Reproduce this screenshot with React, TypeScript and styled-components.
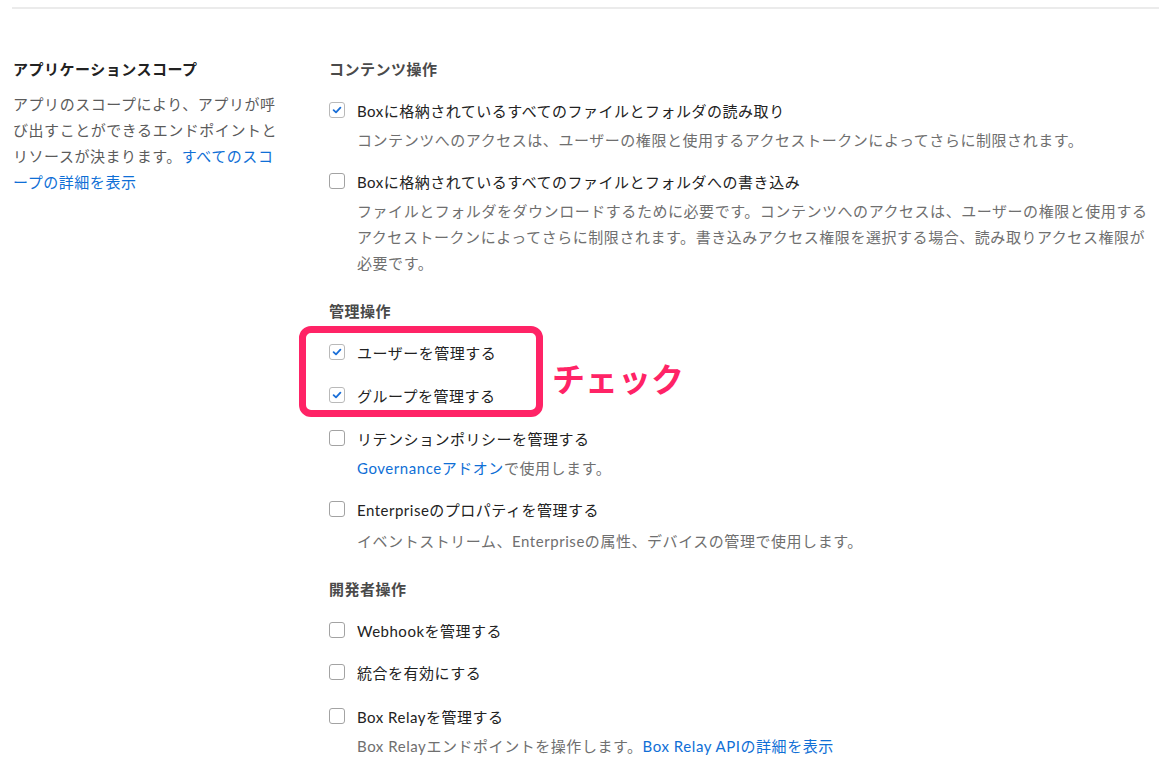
import React from "react";
import styled, { createGlobalStyle } from "styled-components";

const GlobalStyle = createGlobalStyle`
  html, body {
    margin: 0;
    padding: 0;
    background: #ffffff;
  }
  body {
    font-family: "Lato", "Noto Sans CJK JP", sans-serif;
    font-size: 15px;
    color: #222222;
    -webkit-font-smoothing: antialiased;
  }
`;

const Page = styled.div`
  width: 1171px;
  padding-top: 7px;
`;

const Divider = styled.div`
  height: 2px;
  margin: 0 12px;
  background: #ebebeb;
`;

const Section = styled.section`
  display: grid;
  grid-template-columns: 316px 1fr;
  padding: 47px 0 0 13px;
`;

const Intro = styled.div`
  display: flex;
  flex-direction: column;
  gap: 9px;
`;

const IntroTitle = styled.h2`
  margin: 0;
  font-size: 15px;
  line-height: 26px;
  font-weight: 700;
  letter-spacing: 0.5px;
  color: #222222;
`;

const IntroText = styled.p`
  margin: 0;
  width: 272px;
  font-size: 15px;
  line-height: 26px;
  letter-spacing: 0.55px;
  color: #5b5b5b;
  line-break: loose;
`;

const Link = styled.a`
  color: #0f6fd6;
  text-decoration: none;
`;

const Scopes = styled.div`
  display: flex;
  flex-direction: column;
  width: 830px;
`;

const GroupTitle = styled.h3<{ $first?: boolean }>`
  margin: ${(p) => (p.$first ? "0" : "7px")} 0 15px;
  font-size: 15px;
  line-height: 26px;
  font-weight: 700;
  letter-spacing: 0.5px;
  color: #4a4a4a;
`;

const Item = styled.div<{ $gap: number }>`
  display: flex;
  flex-direction: column;
  padding-bottom: ${(p) => p.$gap}px;
`;

const Row = styled.label`
  display: flex;
  align-items: center;
  gap: 12px;
  height: 26px;
  font-size: 15px;
  letter-spacing: 0.5px;
  color: #222222;
`;

const Box = styled.span<{ $checked?: boolean }>`
  box-sizing: border-box;
  display: inline-flex;
  align-items: center;
  justify-content: center;
  flex: none;
  width: 16px;
  height: 16px;
  border: 1px solid ${(p) => (p.$checked ? "#b9b9b9" : "#a3a3a3")};
  border-radius: 3px;
  background: #ffffff;
`;

const Desc = styled.p<{ $offset: number }>`
  margin: ${(p) => p.$offset}px 0 0 28px;
  width: 796px;
  font-size: 15px;
  line-height: 26px;
  letter-spacing: 0.55px;
  color: #6f6f6f;
`;

const Highlight = styled.div`
  position: relative;
  display: flex;
  flex-direction: column;
`;

const Frame = styled.div`
  position: absolute;
  left: -30px;
  top: -13px;
  width: 244px;
  height: 91px;
  box-sizing: border-box;
  border: 7px solid #ff2366;
  border-radius: 12px;
  pointer-events: none;
`;

const Callout = styled.span`
  position: absolute;
  left: 223px;
  top: 19px;
  font-family: "Noto Sans CJK JP", sans-serif;
  font-size: 33px;
  line-height: 40px;
  font-weight: 700;
  color: #ff2366;
  white-space: nowrap;
`;

const CheckMark = () => (
  <svg width="10" height="10" viewBox="0 0 10 10" fill="none">
    <path
      d="M1.6 5.2 L4 7.4 L8.4 2.6"
      stroke="#1a6fd8"
      strokeWidth="1.8"
      strokeLinecap="round"
      strokeLinejoin="round"
    />
  </svg>
);

type ScopeProps = {
  label: React.ReactNode;
  checked?: boolean;
  children?: React.ReactNode;
  gap?: number;
  descOffset?: number;
};

const Scope = ({ label, checked, children, gap = 17, descOffset = 4 }: ScopeProps) => (
  <Item $gap={children ? 15 : gap}>
    <Row>
      <Box $checked={checked}>{checked && <CheckMark />}</Box>
      <span>{label}</span>
    </Row>
    {children && <Desc $offset={descOffset}>{children}</Desc>}
  </Item>
);

export default function App() {
  return (
    <Page>
      <GlobalStyle />
      <Divider />
      <Section>
        <Intro>
          <IntroTitle>アプリケーションスコープ</IntroTitle>
          <IntroText>
            アプリのスコープにより、アプリが呼び出すことができるエンドポイントとリソースが決まります。
            <Link href="#">すべてのスコープの詳細を表示</Link>
          </IntroText>
        </Intro>

        <Scopes>
          <GroupTitle $first>コンテンツ操作</GroupTitle>
          <Scope label="Boxに格納されているすべてのファイルとフォルダの読み取り" checked>
            コンテンツへのアクセスは、ユーザーの権限と使用するアクセストークンによってさらに制限されます。
          </Scope>
          <Scope label="Boxに格納されているすべてのファイルとフォルダへの書き込み">
            ファイルとフォルダをダウンロードするために必要です。コンテンツへのアクセスは、ユーザーの権限と使用するアクセストークンによってさらに制限されます。書き込みアクセス権限を選択する場合、読み取りアクセス権限が必要です。
          </Scope>

          <GroupTitle>管理操作</GroupTitle>
          <Highlight>
            <Scope label="ユーザーを管理する" checked />
            <Scope label="グループを管理する" checked />
            <Frame />
            <Callout>チェック</Callout>
          </Highlight>
          <Scope label="リテンションポリシーを管理する">
            <Link href="#">Governanceアドオン</Link>で使用します。
          </Scope>
          <Scope label="Enterpriseのプロパティを管理する" descOffset={6}>
            イベントストリーム、Enterpriseの属性、デバイスの管理で使用します。
          </Scope>

          <GroupTitle>開発者操作</GroupTitle>
          <Scope label="Webhookを管理する" gap={16} />
          <Scope label="統合を有効にする" gap={18} />
          <Scope label="Box Relayを管理する">
            Box Relayエンドポイントを操作します。
            <Link href="#">Box Relay APIの詳細を表示</Link>
          </Scope>
        </Scopes>
      </Section>
    </Page>
  );
}
